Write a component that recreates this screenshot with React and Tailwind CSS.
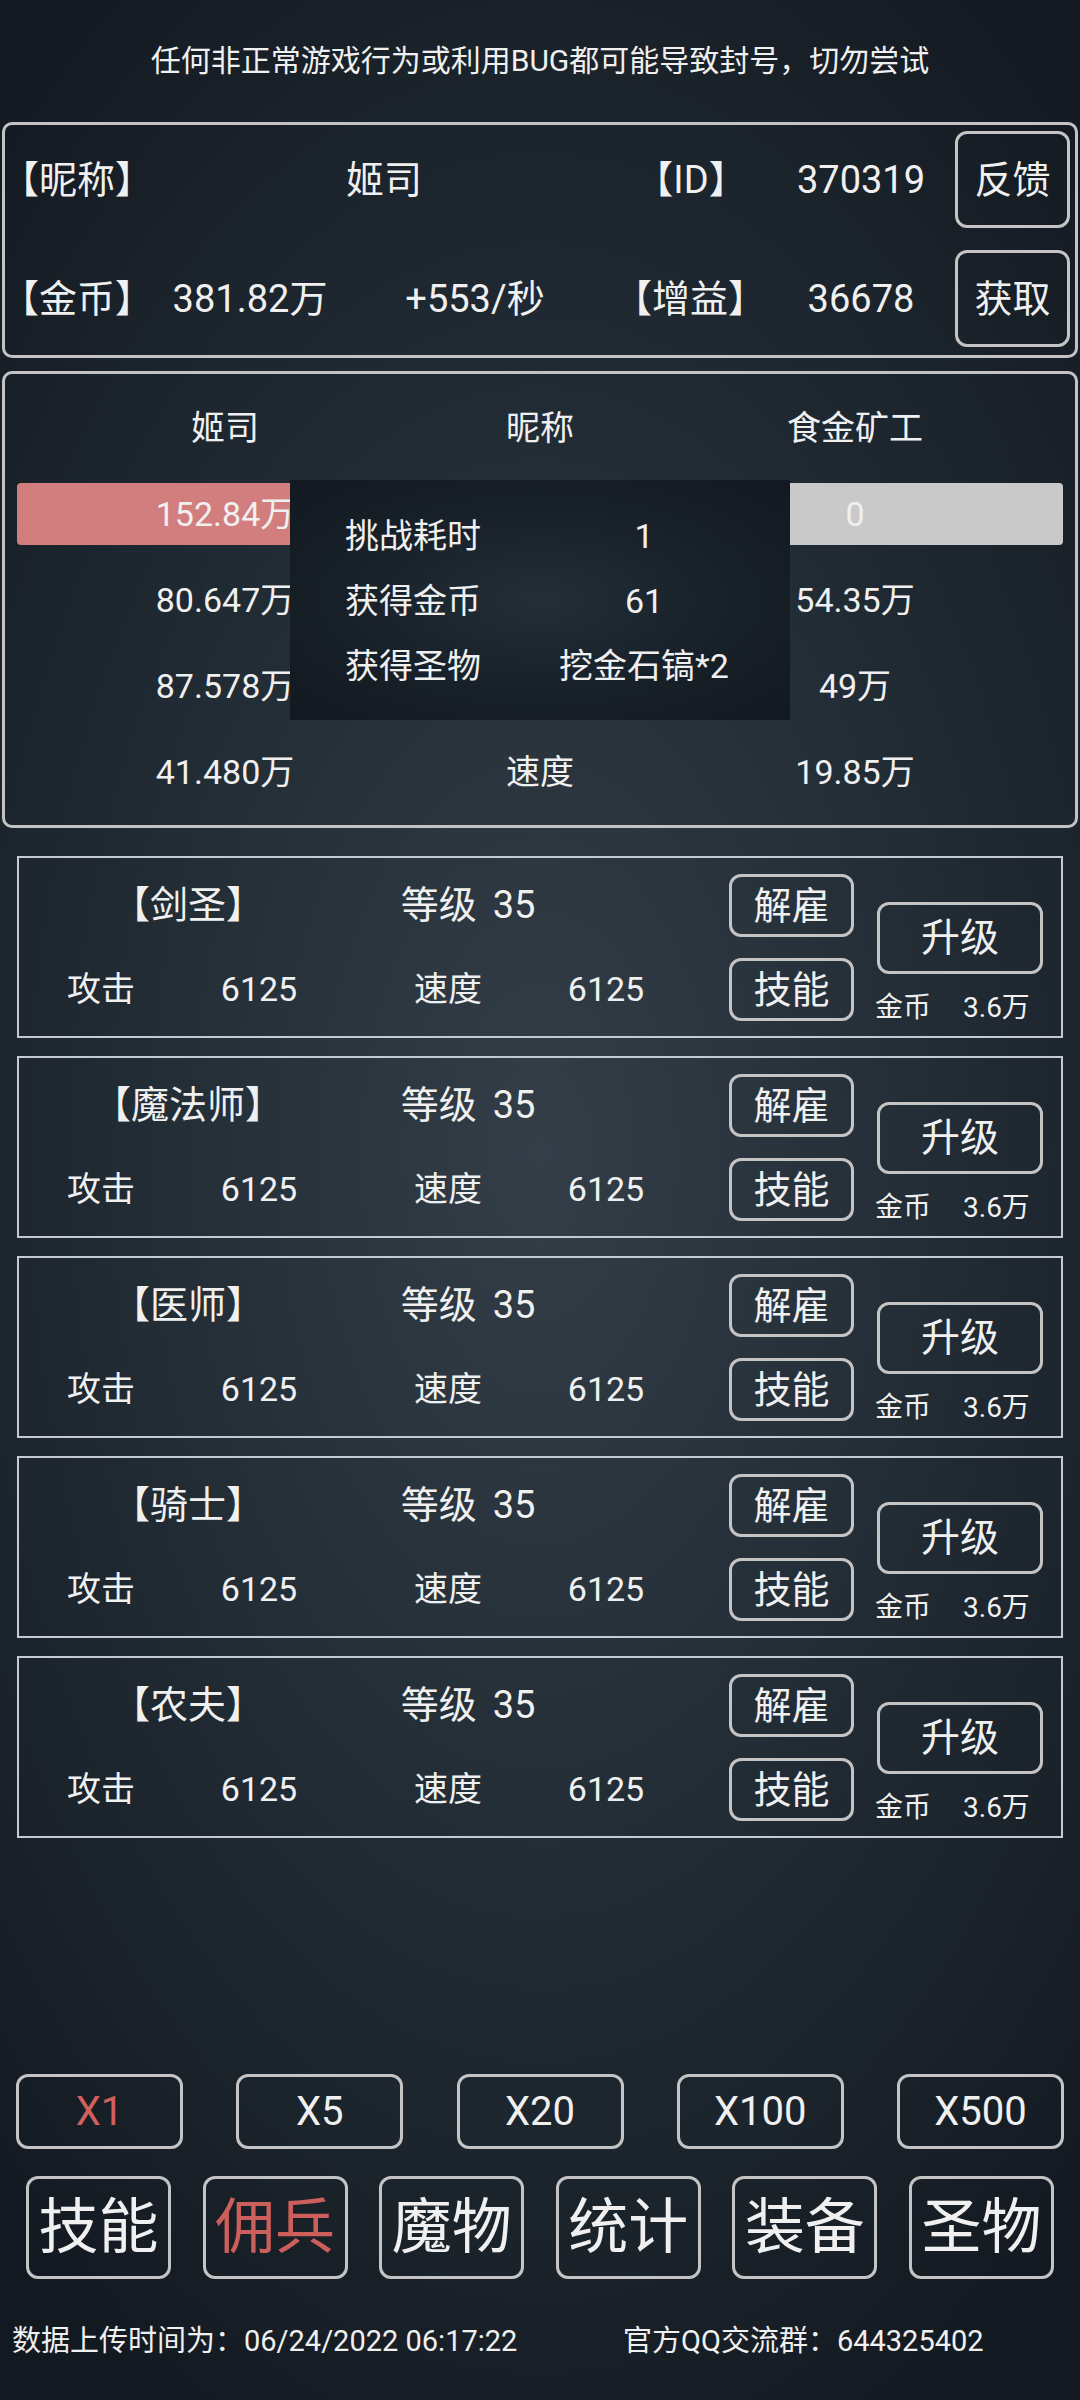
const heroes = ['剑圣', '魔法师', '医师', '骑士', '农夫']
const multipliers = ['X1', 'X5', 'X20', 'X100', 'X500']
const tabs = ['技能', '佣兵', '魔物', '统计', '装备', '圣物']

function Btn({ className = '', children }) {
  return (
    <div className={`flex items-center justify-center border-[3px] border-[#c4c4c4] rounded-[12px] leading-none ${className}`}>
      {children}
    </div>
  )
}

function StatRow({ cells }) {
  return (
    <div className="h-[86px] flex items-center justify-center">
      <div className="grid grid-cols-3 w-[945px] text-center">
        {cells.map((c, i) => (
          <div key={i}>{c}</div>
        ))}
      </div>
    </div>
  )
}

function HeroCard({ name }) {
  return (
    <div className="h-[182px] border-2 border-[#c3cad1] flex">
      <div className="w-[710px] flex flex-col pt-[5px]">
        <div className="h-[84px] flex items-center text-[38px] leading-none">
          <div className="w-[338px] text-center">【{name}】</div>
          <div className="w-[222px] text-center">
            等级<span className="ml-[16px]">35</span>
          </div>
        </div>
        <div className="h-[84px] flex items-center text-[34px] leading-none">
          <div className="w-[164px] text-center">攻击</div>
          <div className="w-[152px] text-center">6125</div>
          <div className="w-[226px] text-center">速度</div>
          <div className="w-[90px] text-center">6125</div>
        </div>
      </div>
      <div className="w-[125px] flex flex-col pt-[16px] gap-[21px] text-[38px]">
        <Btn className="h-[63px]">解雇</Btn>
        <Btn className="h-[63px]">技能</Btn>
      </div>
      <div className="ml-[23px] w-[166px] flex flex-col pt-[44px]">
        <Btn className="h-[72px] text-[39px]">升级</Btn>
        <div className="mt-[17px] h-[34px] flex items-center text-[28px] leading-none -ml-[2px]">
          <span>金币</span>
          <span className="ml-[32px]">3.6万</span>
        </div>
      </div>
    </div>
  )
}

export default function App() {
  return (
    <div className="relative w-[1080px] h-[2400px] flex flex-col overflow-hidden text-[#f0f0f0] font-[Roboto,'Noto_Sans_CJK_SC',sans-serif] bg-[radial-gradient(ellipse_75%_60%_at_50%_48%,#333e48_0%,#222c35_50%,#131920_100%)]">
      <div className="h-[122px] flex items-center justify-center text-[30px] leading-none">
        任何非正常游戏行为或利用BUG都可能导致封号，切勿尝试
      </div>

      {/* player info */}
      <div className="mx-[2px] border-[3px] border-[#c3c3c3] rounded-[10px] pt-[6px] pb-[8px] flex flex-col gap-[22px] text-[38px] leading-none">
        <div className="flex items-center h-[97px]">
          <div className="w-[152px] -ml-[4px] mr-[4px]">【昵称】</div>
          <div className="w-[454px] text-center">姬司</div>
          <div className="w-[160px] text-center">【ID】</div>
          <div className="w-[180px] text-center">370319</div>
          <Btn className="ml-[4px] w-[115px] h-[97px]">反馈</Btn>
        </div>
        <div className="flex items-center h-[97px]">
          <div className="w-[152px] -ml-[4px] mr-[4px]">【金币】</div>
          <div className="w-[186px] text-center">381.82万</div>
          <div className="w-[264px] text-center">+553/秒</div>
          <div className="w-[166px] text-center">【增益】</div>
          <div className="w-[176px] text-center">36678</div>
          <Btn className="ml-[6px] w-[115px] h-[97px]">获取</Btn>
        </div>
      </div>

      {/* battle */}
      <div className="relative mx-[2px] mt-[13px] border-[3px] border-[#c3c3c3] rounded-[10px] pt-[11px] pb-[10px] text-[34px] leading-none">
        <StatRow cells={['姬司', '昵称', '食金矿工']} />
        <div className="h-[86px] flex items-center px-[12px]">
          <div className="w-full h-[62px] rounded-[4px] bg-[linear-gradient(to_right,#d27e7e_50%,#c9c9c9_50%)] flex items-center justify-center">
            <div className="grid grid-cols-3 w-[945px] text-center">
              <div>152.84万</div>
              <div />
              <div>0</div>
            </div>
          </div>
        </div>
        <StatRow cells={['80.647万', '', '54.35万']} />
        <StatRow cells={['87.578万', '', '49万']} />
        <StatRow cells={['41.480万', '速度', '19.85万']} />

        <div className="absolute left-[285px] top-[106px] w-[500px] h-[240px] pt-[23px] bg-[radial-gradient(ellipse_at_center,#232e38_0%,#161e26_65%,#121920_100%)]">
          {[
            ['挑战耗时', '1'],
            ['获得金币', '61'],
            ['获得圣物', '挖金石镐*2'],
          ].map(([k, v]) => (
            <div key={k} className="h-[65px] grid grid-cols-[246px_216px] items-center text-center">
              <div>{k}</div>
              <div>{v}</div>
            </div>
          ))}
        </div>
      </div>

      {/* heroes */}
      <div className="mt-[28px] mx-[17px] flex flex-col gap-[18px]">
        {heroes.map((h) => (
          <HeroCard key={h} name={h} />
        ))}
      </div>

      <div className="flex-1" />

      <div className="flex justify-between px-[16px] text-[40px]">
        {multipliers.map((m, i) => (
          <Btn key={m} className={`w-[167px] h-[75px] rounded-[10px] ${i === 0 ? 'text-[#d2605c]' : ''}`}>
            {m}
          </Btn>
        ))}
      </div>

      <div className="mt-[27px] flex justify-between px-[26px] text-[60px]">
        {tabs.map((t, i) => (
          <Btn key={t} className={`w-[145px] h-[103px] ${i === 1 ? 'text-[#cc5f5b]' : ''}`}>
            {t}
          </Btn>
        ))}
      </div>

      <div className="mt-[42px] mb-[39px] h-[40px] flex items-center text-[29px] leading-none">
        <div className="w-[623px] pl-[12px]">数据上传时间为：06/24/2022 06:17:22</div>
        <div>官方QQ交流群：644325402</div>
      </div>
    </div>
  )
}
